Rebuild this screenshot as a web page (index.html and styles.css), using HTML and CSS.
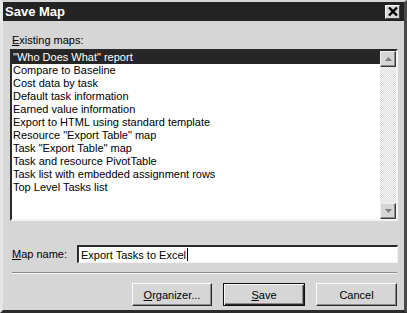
FILE: index.html
```html
<!DOCTYPE html>
<html>
<head>
<meta charset="utf-8">
<link rel="stylesheet" href="styles.css">
</head>
<body>
<div class="window">
  <div class="titlebar">
    <span class="title">Save Map</span>
    <span class="close"><svg width="10" height="9" viewBox="0 0 10 9"><path d="M1 0.5 L9 8.5 M9 0.5 L1 8.5" stroke="#000" stroke-width="2.4"/></svg></span>
  </div>
  <div class="content">
    <div class="label"><u>E</u>xisting maps:</div>
    <div class="listbox">
      <ul class="items">
        <li class="sel">"Who Does What" report</li>
        <li>Compare to Baseline</li>
        <li>Cost data by task</li>
        <li>Default task information</li>
        <li>Earned value information</li>
        <li>Export to HTML using standard template</li>
        <li>Resource "Export Table" map</li>
        <li>Task "Export Table" map</li>
        <li>Task and resource PivotTable</li>
        <li>Task list with embedded assignment rows</li>
        <li>Top Level Tasks list</li>
      </ul>
      <div class="scrollbar">
        <span class="sbtn"><svg width="7" height="4" viewBox="0 0 7 4"><path d="M0 4 L3.5 0 L7 4Z" fill="#808080"/></svg></span>
        <span class="track"></span>
        <span class="sbtn"><svg width="7" height="4" viewBox="0 0 7 4"><path d="M0 0 L3.5 4 L7 0Z" fill="#808080"/></svg></span>
      </div>
    </div>
    <div class="namerow">
      <span class="namelabel"><u>M</u>ap name:</span>
      <div class="input">Export Tasks to Excel<span class="caret"></span></div>
    </div>
    <div class="sep"></div>
    <div class="buttons">
      <button class="btn organizer"><u>O</u>rganizer...</button>
      <button class="btn default"><u>S</u>ave</button>
      <button class="btn cancel">Cancel</button>
    </div>
  </div>
</div>
</body>
</html>
```

FILE: styles.css
```css
* { box-sizing: border-box; }
html, body { margin: 0; padding: 0; }
body {
  width: 407px;
  height: 313px;
  background: #d4d4d4;
  font-family: "Liberation Sans", Arial, sans-serif;
  font-size: 11px;
  color: #000;
}
.window {
  width: 407px;
  height: 313px;
  background: #d6d6d6;
  border-top: 2px solid #d6d6d6;
  border-left: 3px solid #e6e6e6;
  border-right: 3px solid #4a4a4a;
  border-bottom: 3px solid #2c2c2c;
  display: flex;
  flex-direction: column;
}
.titlebar {
  height: 19px;
  background: #232323;
  display: flex;
  align-items: center;
  justify-content: space-between;
  padding: 0 2px 0 2px;
}
.title {
  color: #fff;
  font-weight: bold;
  font-size: 13px;
  letter-spacing: 0;
}
.close {
  width: 15px;
  height: 14px;
  background: #d6d6d6;
  border-top: 1px solid #fff;
  border-left: 1px solid #fff;
  border-right: 1px solid #404040;
  border-bottom: 1px solid #404040;
  display: flex;
  align-items: center;
  justify-content: center;
  margin-right: 2px;
}
.content {
  flex: 1;
  display: flex;
  flex-direction: column;
  padding: 0 6px 0 7px;
}
.label {
  margin-top: 13px;
  margin-left: 2px;
  line-height: 13px;
}
u { text-decoration: underline; text-underline-offset: 1px; }
.listbox {
  margin-top: 2px;
  height: 172px;
  width: 388px;
  background: #fff;
  border-top: 2px solid #2a2a2a;
  border-left: 2px solid #2a2a2a;
  border-right: 2px solid #f4f4f4;
  border-bottom: 2px solid #f4f4f4;
  display: flex;
}
.items {
  list-style: none;
  margin: 0;
  padding: 0;
  flex: 1;
}
.items li {
  height: 13px;
  line-height: 13px;
  padding-left: 1px;
  white-space: nowrap;
}
.items li.sel {
  background: #262626;
  color: #fff;
}
.scrollbar {
  width: 16px;
  display: flex;
  flex-direction: column;
}
.sbtn {
  height: 16px;
  background: #d6d6d6;
  border-top: 1px solid #f0f0f0;
  border-left: 1px solid #f0f0f0;
  border-right: 1px solid #3a3a3a;
  border-bottom: 1px solid #3a3a3a;
  box-shadow: inset -1px -1px 0 #8a8a8a;
  display: flex;
  align-items: center;
  justify-content: center;
}
.track {
  flex: 1;
  background-color: #ececec;
  background-image: repeating-conic-gradient(#f8f8f8 0 25%, #dcdcdc 0 50%);
  background-size: 2px 2px;
}
.namerow {
  margin-top: 24px;
  display: flex;
  align-items: center;
}
.namelabel {
  width: 67px;
  padding-left: 2px;
}
.input {
  width: 321px;
  height: 18px;
  background: #fff;
  border-top: 2px solid #2a2a2a;
  border-left: 2px solid #2a2a2a;
  border-right: 1px solid #f4f4f4;
  border-bottom: 1px solid #f4f4f4;
  font-size: 11px;
  line-height: 14px;
  padding-left: 2px;
  display: flex;
  align-items: center;
}
.caret {
  display: inline-block;
  width: 1px;
  height: 13px;
  background: #000;
  margin-left: 1px;
}
.sep {
  margin-top: 9px;
  margin-left: 2px;
  width: 385px;
  height: 2px;
  border-top: 1px solid #8a8a8a;
  border-bottom: 1px solid #fafafa;
}
.buttons {
  margin-top: 9px;
  display: flex;
  justify-content: flex-end;
  gap: 11px;
  padding-right: 1px;
}
.btn {
  font-family: "Liberation Sans", Arial, sans-serif;
  font-size: 11px;
  color: #000;
  height: 23px;
  background: #d6d6d6;
  border-top: 1px solid #fafafa;
  border-left: 1px solid #fafafa;
  border-right: 1px solid #2a2a2a;
  border-bottom: 1px solid #2a2a2a;
  box-shadow: inset -1px -1px 0 #8a8a8a;
  padding: 0;
  margin: 0;
}
.organizer { width: 80px; }
.default {
  width: 82px;
  border: 1px solid #111;
  box-shadow: inset 1px 1px 0 #fafafa, inset -1px -1px 0 #2a2a2a, inset -2px -2px 0 #8a8a8a;
}
.cancel { width: 81px; }
```
